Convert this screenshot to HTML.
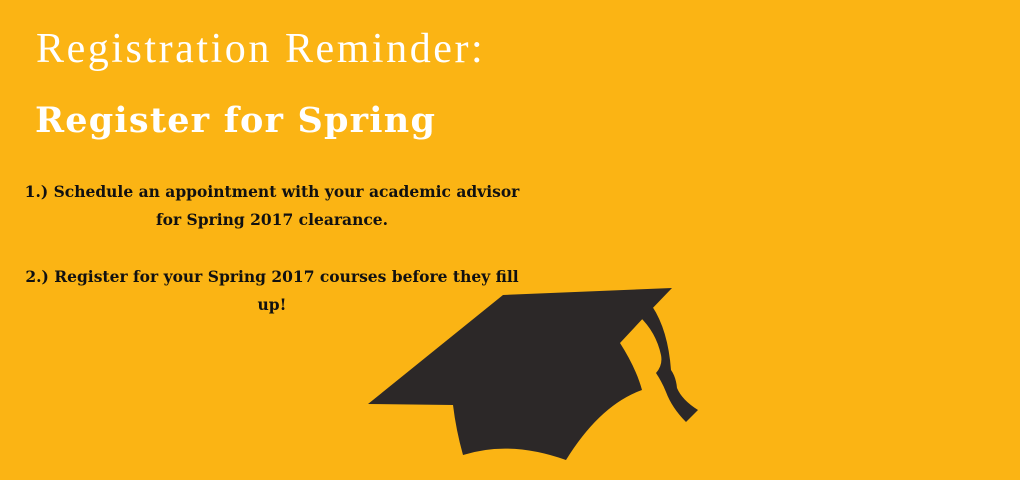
<!DOCTYPE html>
<html><head><style>
html,body{margin:0;padding:0}
body{width:1020px;height:480px;background:#fbb414;position:relative;overflow:hidden;font-family:"DejaVu Serif","Liberation Serif",serif}
.t1{position:absolute;left:36px;top:25px;color:#fff;font-size:42px;font-weight:normal;font-family:"Liberation Serif",serif;letter-spacing:2.55px;white-space:nowrap}
.t2{position:absolute;left:35px;top:100px;color:#fff;font-size:35px;font-weight:bold;font-family:"DejaVu Serif",serif;letter-spacing:1.2px;white-space:nowrap}
.b{position:absolute;left:12px;width:520px;text-align:center;color:#111;font-size:15.5px;font-weight:bold;line-height:28px;font-family:"DejaVu Serif",serif;letter-spacing:0px}
</style></head><body>
<div class="t1">Registration Reminder:</div>
<div class="t2">Register for Spring</div>
<div class="b" style="top:178px">1.) Schedule an appointment with your academic advisor<br>for Spring 2017 clearance.</div>
<div class="b" style="top:263px">2.) Register for your Spring 2017 courses before they fill<br>up!</div>
<svg width="1020" height="480" style="position:absolute;left:0;top:0">
<path d="M503,295 L672,288 L648,313 L620,343 Q636,368 642,390 Q600,405 566,460 Q510,440 463,455 Q456,430 453,405 L368,404 Z" fill="#2c2828"/>
<path d="M639,316 Q656,332 661,355 Q663,365 656,373 Q662,382 666,392 Q672,408 686,422 L698,410 Q682,400 677,388 Q676,377 671,370 Q668,330 652,306 Z" fill="#2c2828"/>
</svg>
</body></html>
